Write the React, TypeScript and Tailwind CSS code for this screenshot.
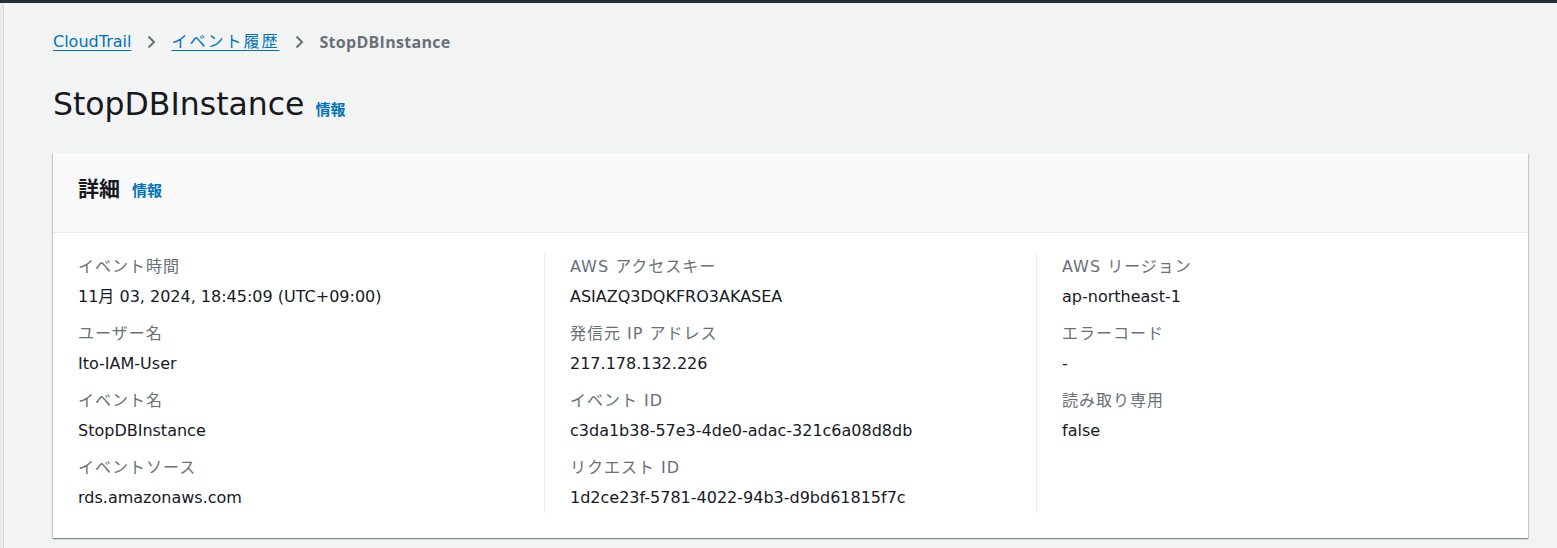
import React from "react";

const font = { fontFamily: '"DejaVu Sans", "Noto Sans CJK JP", sans-serif' };
const boldFont = { fontFamily: '"Open Sans", "Noto Sans CJK JP", sans-serif' };

function Chevron() {
  return (
    <svg width="16" height="16" viewBox="0 0 16 16" className="mx-[12px] shrink-0">
      <path d="M5.5 2.5 11 8l-5.5 5.5" fill="none" stroke="#687078" strokeWidth="2" />
    </svg>
  );
}

function Field({ label, value }: { label: string; value: string }) {
  return (
    <div className="flex flex-col gap-[8px]">
      <div className="text-[16px] leading-[22px] text-[#687078] tracking-[1px]">{label}</div>
      <div className="text-[16px] leading-[22px] text-[#16191f]">{value}</div>
    </div>
  );
}

export default function App() {
  const col1 = [
    ["イベント時間", "11月 03, 2024, 18:45:09 (UTC+09:00)"],
    ["ユーザー名", "Ito-IAM-User"],
    ["イベント名", "StopDBInstance"],
    ["イベントソース", "rds.amazonaws.com"],
  ];
  const col2 = [
    ["AWS アクセスキー", "ASIAZQ3DQKFRO3AKASEA"],
    ["発信元 IP アドレス", "217.178.132.226"],
    ["イベント ID", "c3da1b38-57e3-4de0-adac-321c6a08d8db"],
    ["リクエスト ID", "1d2ce23f-5781-4022-94b3-d9bd61815f7c"],
  ];
  const col3 = [
    ["AWS リージョン", "ap-northeast-1"],
    ["エラーコード", "-"],
    ["読み取り専用", "false"],
  ];
  return (
    <div className="min-h-screen bg-[#f2f3f3] flex flex-col" style={font}>
      <div className="h-[3px] bg-[#232f3e]" />
      <div className="flex flex-1">
        <div className="w-[4px] border-r border-[#d5dbdb] bg-[#eaeded]" />
        <div className="flex-1 pl-[49px] pr-[29px]">
          <nav className="pt-[27px] flex items-center h-[51px] text-[16px] leading-[24px]">
            <a className="text-[#0073bb] underline underline-offset-[3px]">CloudTrail</a>
            <Chevron />
            <a className="text-[#0073bb] underline underline-offset-[3px] tracking-[2px]">イベント履歴</a>
            <Chevron />
            <span className="font-bold text-[#687078] tracking-[0.3px]" style={boldFont}>StopDBInstance</span>
          </nav>
          <div className="mt-[30px] flex items-baseline gap-[11px] h-[40px]">
            <h1 className="text-[31.5px] leading-[40px] text-[#16191f] font-normal">StopDBInstance</h1>
            <span className="text-[15px] font-bold text-[#0073bb]">情報</span>
          </div>
          <div className="mt-[29px] bg-white shadow-[0_1px_1px_0_rgba(0,28,36,0.3),1px_1px_1px_0_rgba(0,28,36,0.15),-1px_1px_1px_0_rgba(0,28,36,0.15)]">
            <div className="h-[80px] bg-[#fafafa] border-b border-[#eaeded] px-[25px] flex items-center pb-[6px] gap-[12px]">
              <h2 className="text-[21px] font-bold text-[#16191f]">詳細</h2>
              <span className="text-[15px] font-bold text-[#0073bb] mt-[3px]">情報</span>
            </div>
            <div className="flex pt-[20px] pb-[25px] pl-[25px]">
              <div className="w-[466px] pt-[3px] pb-[4px] flex flex-col gap-[15px]">
                {col1.map(([l, v]) => (
                  <Field key={l} label={l} value={v} />
                ))}
              </div>
              <div className="w-[492px] border-l border-[#eaeded] pl-[25px] pt-[3px] pb-[4px] flex flex-col gap-[15px]">
                {col2.map(([l, v]) => (
                  <Field key={l} label={l} value={v} />
                ))}
              </div>
              <div className="flex-1 border-l border-[#eaeded] pl-[25px] pt-[3px] pb-[4px] flex flex-col gap-[15px]">
                {col3.map(([l, v]) => (
                  <Field key={l} label={l} value={v} />
                ))}
              </div>
            </div>
          </div>
        </div>
      </div>
    </div>
  );
}
